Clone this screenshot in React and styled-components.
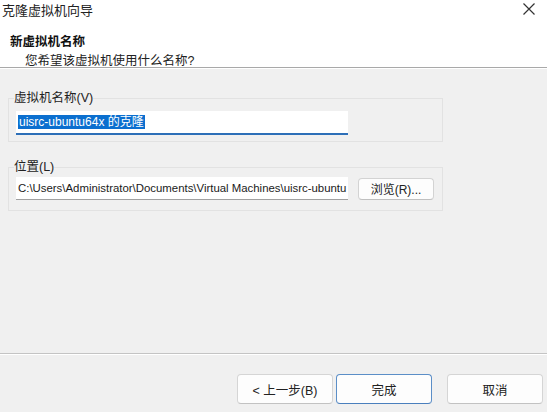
import React from "react";
import styled, { createGlobalStyle } from "styled-components";

const GlobalStyle = createGlobalStyle`
  html, body {
    margin: 0;
    padding: 0;
    background: #f0f0f0;
    overflow: hidden;
  }
  body {
    font-family: "Liberation Sans", "Noto Sans CJK SC", sans-serif;
    color: #1a1a1a;
  }
`;

function App() {
  return (
    <Window>
      <GlobalStyle />
      <Header>
        <TitleRow>
          <WindowTitle>克隆虚拟机向导</WindowTitle>
          <CloseButton aria-label="关闭">
            <svg width="12" height="12" viewBox="0 0 12 12">
              <path d="M0.5 0.5 L11.5 11.5 M11.5 0.5 L0.5 11.5" stroke="#333" strokeWidth="1.2" fill="none" />
            </svg>
          </CloseButton>
        </TitleRow>
        <StepTitle>新虚拟机名称</StepTitle>
        <StepSub>您希望该虚拟机使用什么名称?</StepSub>
      </Header>

      <Content>
        <Group $top={22} $bottom={6}>
          <Legend>虚拟机名称(V)</Legend>
          <Field $gap={5} $focused>
            <Selected>uisrc-ubuntu64x 的克隆</Selected>
          </Field>
        </Group>

        <Group $top={17} $bottom={10}>
          <Legend>位置(L)</Legend>
          <FieldRow>
            <Field $gap={0}>C:\Users\Administrator\Documents\Virtual Machines\uisrc-ubuntu</Field>
            <SmallButton>浏览(R)...</SmallButton>
          </FieldRow>
        </Group>
      </Content>

      <Footer>
        <Button>&lt; 上一步(B)</Button>
        <Button $primary>完成</Button>
        <Button $spaced>取消</Button>
      </Footer>
    </Window>
  );
}
export default App;

const Window = styled.div`
  width: 547px;
  height: 412px;
  display: flex;
  flex-direction: column;
  overflow: hidden;
`;

const Header = styled.div`
  height: 68px;
  background: #fff;
  border-bottom: 1px solid #a9a9a9;
  box-shadow: 0 1px 0 #fff;
  box-sizing: border-box;
`;

const TitleRow = styled.div`
  height: 18px;
  display: flex;
  align-items: center;
  justify-content: space-between;
  padding: 0 12px 0 2px;
`;

const WindowTitle = styled.div`
  font-size: 13px;
  color: #222;
`;

const CloseButton = styled.div`
  width: 13px;
  height: 18px;
  flex: none;
  display: flex;
  align-items: center;
  justify-content: center;
`;

const StepTitle = styled.div`
  margin-top: 16px;
  padding-left: 10px;
  font-size: 12.5px;
  font-weight: bold;
  line-height: 16px;
  color: #111;
`;

const StepSub = styled.div`
  margin-top: 3px;
  padding-left: 25px;
  font-size: 12.5px;
  line-height: 16px;
  color: #222;
`;

const Content = styled.div`
  flex: 1;
  padding: 0 104px 0 8px;
`;

const Group = styled.fieldset`
  margin: ${(p) => p.$top}px 0 0 0;
  padding: 0 8px ${(p) => p.$bottom}px 7px;
  border: 1px solid #e2e2e2;
  min-width: 0;
`;

const Legend = styled.legend`
  padding: 0;
  margin-left: -2px;
  font-size: 12.5px;
  line-height: 16px;
  color: #222;
`;

const Field = styled.div`
  margin-top: ${(p) => p.$gap}px;
  width: 332px;
  flex: none;
  height: ${(p) => (p.$focused ? 24 : 23)}px;
  box-sizing: border-box;
  background: #fff;
  border-bottom: ${(p) => (p.$focused ? "2px solid #2d6fb8" : "1px solid #a0a0a0")};
  padding: 0 2px;
  display: flex;
  align-items: center;
  font-size: 11.4px;
  white-space: nowrap;
  color: #1a1a1a;
`;

const Selected = styled.span`
  background: #0b6fcf;
  color: #fff;
  font-size: 12px;
  line-height: 14px;
  padding: 0 1px;
`;

const FieldRow = styled.div`
  margin-top: 2px;
  display: flex;
  align-items: center;
  gap: 10px;
`;

const SmallButton = styled.button`
  width: 77px;
  height: 22px;
  box-sizing: border-box;
  background: #fdfdfd;
  border: 1px solid #d3d3d3;
  border-bottom-color: #c0c0c0;
  border-radius: 4px;
  font-family: inherit;
  font-size: 12px;
  color: #222;
  padding: 0;
`;

const Footer = styled.div`
  height: 59px;
  border-top: 1px solid #c4c4c4;
  box-shadow: inset 0 1px 0 #fff;
  box-sizing: border-box;
  display: flex;
  justify-content: flex-end;
  align-items: flex-start;
  padding: 20px 4px 0 0;
  gap: 3px;
`;

const Button = styled.button`
  width: 96px;
  height: 30px;
  box-sizing: border-box;
  margin-left: ${(p) => (p.$spaced ? "12px" : "0")};
  background: #fdfdfd;
  border: 1px solid ${(p) => (p.$primary ? "#5b8ec7" : "#d5d5d5")};
  border-bottom-color: ${(p) => (p.$primary ? "#4a7fbd" : "#c2c2c2")};
  border-radius: 4px;
  font-family: inherit;
  font-size: 12.5px;
  color: #222;
  padding: 0;
`;
